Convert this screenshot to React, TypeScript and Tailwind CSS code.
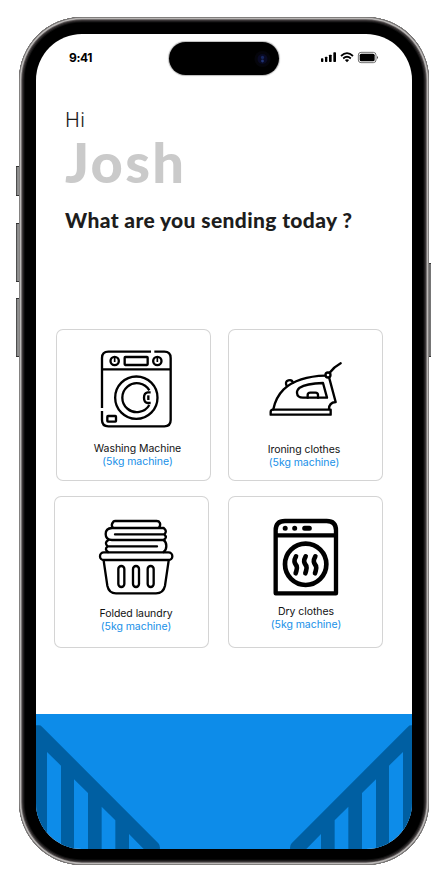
import type { ReactNode } from "react";

function StatusBar() {
  return (
    <header className="flex h-[77px] shrink-0">
      <div className="mt-[17px] ml-[33px] w-[60px] font-['Inter',sans-serif] text-[12px] leading-[14px] font-bold tracking-[-0.4px] text-black">
        9:41
      </div>
      <div className="mt-[8px] ml-[40px] h-[33px] w-[110px] rounded-full bg-black shadow-[0_0_1px_1px_#bbb]">
        <svg className="h-[33px] w-[110px]" viewBox="0 0 110 33">
          <circle cx="93.5" cy="17" r="8" fill="#05050b" />
          <circle cx="93.5" cy="17" r="5" fill="#090a24" />
          <circle cx="93.5" cy="15.4" r="1.6" fill="#17275f" />
          <circle cx="93.5" cy="19" r="1.4" fill="#203576" />
        </svg>
      </div>
      <svg className="mt-[16px] ml-[40px] h-[14px] w-[62px]" viewBox="285 150 186 42">
        <rect x="291" y="175" width="7" height="11" rx="2" />
        <rect x="303" y="170" width="7" height="16" rx="2" />
        <rect x="315" y="164" width="8" height="22" rx="2" />
        <rect x="328" y="157" width="8" height="29" rx="2" />
        <g fill="none" stroke="#000" strokeWidth="5.2">
          <path d="M351 168 Q369 151 387 168" />
          <path d="M357.500 175.500 Q369 165 380.500 175.500" />
        </g>
        <path d="M362.500 180 Q369 175 375.500 180 L369 186.500Z" />
        <rect x="403" y="157" width="53" height="31" rx="8" fill="none" stroke="#555" strokeWidth="2.500" />
        <rect x="407" y="161" width="45" height="23" rx="5" />
        <path d="M459 168 Q465 172 459 177Z" fill="#444" />
      </svg>
    </header>
  );
}

function WashingMachine() {
  return (
    <svg className="h-[110px] w-[155px] shrink-0" viewBox="47 26 465 330" fill="none" stroke="#000" strokeWidth="7">
      <path d="M185 263 V113 Q185 94 204 94 H332 M342 94 H372 Q391 94 391 113 V299 Q391 318 372 318 H204 Q185 318 185 299 V272 M185 147 H391" />
      <circle cx="223" cy="122" r="12.500" />
      <circle cx="351" cy="122" r="12.500" />
      <path d="M223 113 V125 M351 113 V125" strokeWidth="5" />
      <rect x="253" y="110" width="69" height="24" rx="2" />
      <circle cx="288" cy="232" r="63.500" />
      <path d="M327 210 A43.500 43.500 0 1 0 327 254 M331 216 H322 Q311 218 311 232 Q311 246 322 248 H331" />
      <path d="M324 225 V239" />
      <rect x="201" y="287" width="26" height="17" rx="2" />
    </svg>
  );
}

function Iron() {
  return (
    <svg className="h-[110px] w-[155px] shrink-0" viewBox="25 26 465 330" fill="none" stroke="#000" strokeWidth="7" strokeLinecap="round" strokeLinejoin="round">
      <path d="M153 283 V275 Q153 268 160 268 H333 V283Z" />
      <path d="M161 267 Q168 231 192 207 Q235 168 317 166" />
      <path d="M329 174 L348 245 Q328 247 328 266" />
      <circle cx="325" cy="164" r="7.500" />
      <path d="M330 157 Q343 140 363 129" />
      <path d="M201 197 Q195 183 206 180 Q217 177 220 187" />
      <path d="M310 188 Q259 190 240 202 Q231 210 232 218 Q233 232 250 232 H322Z" />
      <path d="M264 232 V224 Q264 217 272 217 H287 Q295 217 295 224 V232" />
    </svg>
  );
}

function Basket() {
  return (
    <svg className="h-[110px] w-[155px] shrink-0" viewBox="42 17 465 330" fill="none" stroke="#000" strokeWidth="7" strokeLinecap="round" strokeLinejoin="round">
      <path d="M218 112 Q212 103 220 94 Q222 92 226 92 H350 Q357 92 359 97 Q363 104 357 112" />
      <path d="M371 113 H216 Q197 114 197 131 Q197 149 216 149 H371 Q383 142 373 132 Q383 122 371 113 M225 132 H373" />
      <path d="M204 150 Q192 158 203 168 Q192 176 204 185 M371 149 Q379 155 379 167 Q379 179 371 185 M203 168 H351" />
      <rect x="180" y="186" width="217" height="23" rx="11.500" />
      <path d="M191 211 L202 286 Q207 309 228 309 H348 Q370 309 375 286 L386 211" />
      <rect x="235" y="227" width="18" height="63" rx="9" />
      <rect x="279" y="227" width="18" height="63" rx="9" />
      <rect x="323" y="227" width="18" height="63" rx="9" />
    </svg>
  );
}

function Dryer() {
  return (
    <svg className="h-[110px] w-[155px] shrink-0" viewBox="25 17 465 330" fill="none" stroke="#000" strokeWidth="13" strokeLinecap="round" strokeLinejoin="round">
      <path d="M168 309 V120 Q168 92 196 92 H321 Q349 92 349 120 V309Z M168 135 H349" />
      <path d="M196.500 114 h.1 M225 114 h.1 M255 114 H269" strokeWidth="15" />
      <circle cx="258" cy="222" r="62" strokeWidth="14" />
      <g strokeWidth="14">
        <path d="M229 198 C220 214 226 219 231 227 C234 236 230 240 228 249" />
        <path d="M258 198 C249 214 255 219 260 227 C263 236 259 240 257 249" />
        <path d="M287 198 C278 214 284 219 289 227 C292 236 288 240 286 249" />
      </g>
    </svg>
  );
}

function ServiceCard({ title, icon, shift, caption }: { title: string; icon: ReactNode; shift: string; caption: string }) {
  return (
    <div className={`h-[152px] w-[155px] rounded-[7px] shadow-[inset_0_0_0_1px_#d4d4d4] ${shift}`}>
      {icon}
      <div className={`text-center font-['Inter',sans-serif] text-[10.500px] leading-[13px] tracking-[-.05px] whitespace-nowrap ${caption}`}>
        <p className="text-[#111]">{title}</p>
        <p className="text-[#168fe8]">(5kg machine)</p>
      </div>
    </div>
  );
}

function Railing() {
  return (
    <svg className="h-[136px] w-[125px]" viewBox="108 71 375 408" fill="#005fa2">
      <path d="M90 105 H117 Q122 105 126 109 L475 459 Q482 467 479 479 H434 L387 431 V479 H346 V390 L305 349 V479 H264 V308 L222 267 V479 H183 V226 L141 185 V479 H90Z" />
    </svg>
  );
}

function SideButton({ className }: { className: string }) {
  return (
    <div className={`bg-linear-to-r from-[#333] via-[#aaa] to-[#444] shadow-[inset_0_1px_0_#333,inset_0_-1px_0_#333] ${className}`} />
  );
}

export default function App() {
  return (
    <main className="flex h-[882px] w-[448px] items-start overflow-hidden bg-white pt-[17px]">
      <div className="ml-[16px] flex w-[3px] shrink-0 flex-col pt-[149px]">
        <SideButton className="h-[30px] w-[4px]" />
        <SideButton className="mt-[27px] h-[59px] w-[4px]" />
        <SideButton className="mt-[16px] h-[59px] w-[4px]" />
      </div>
      <div className="h-[848px] w-[410px] shrink-0 rounded-[63px] bg-black p-[17px] pb-[16px] shadow-[inset_0_0_0_.7px_#6d6b6a,inset_0_0_0_2.300px_#bbb8b7,inset_0_0_0_3.300px_#5d5959,inset_0_0_0_4.600px_#2d292a,inset_0_0_0_5.600px_#111]">
        <div className="flex h-[815px] w-[376px] flex-col overflow-hidden rounded-[46px] bg-white">
          <StatusBar />
          <section className="h-[218px] shrink-0 pl-[29px] font-['Lato',sans-serif] whitespace-nowrap">
            <p className="h-[26px] font-['Inter',sans-serif] text-[20px] leading-[18px] font-light tracking-[.4px] text-[#1d1d1b]">Hi</p>
            <h1 className="h-[54px] text-[56px] leading-[50px] font-black tracking-[2.300px] text-[#cacaca]">Josh</h1>
            <h2 className="pt-[17px] text-[21px] leading-[24px] font-black tracking-[.370px] text-[#1d1d1d]">What are you sending today ?</h2>
          </section>
          <section className="grid h-[385px] shrink-0 grid-cols-[155px_155px] content-start gap-x-[17px] gap-y-[15px] pl-[20px]">
            <ServiceCard title="Washing Machine" icon={<WashingMachine />} shift="" caption="pl-[8px] pt-[3px]" />
            <ServiceCard title="Ironing clothes" icon={<Iron />} shift="" caption="pr-[3px] pt-[4px]" />
            <ServiceCard title="Folded laundry" icon={<Basket />} shift="-ml-[2px]" caption="pl-[9px] pt-px" />
            <ServiceCard title="Dry clothes" icon={<Dryer />} shift="" caption="pl-[1px] -mt-[1px]" />
          </section>
          <footer className="flex h-[135px] shrink-0 justify-between bg-[#0d8ce9]">
            <Railing />
            <div className="-mr-[2px] -scale-x-100">
              <Railing />
            </div>
          </footer>
        </div>
      </div>
      <SideButton className="mt-[246px] h-[94px] w-[2px]" />
    </main>
  );
}
